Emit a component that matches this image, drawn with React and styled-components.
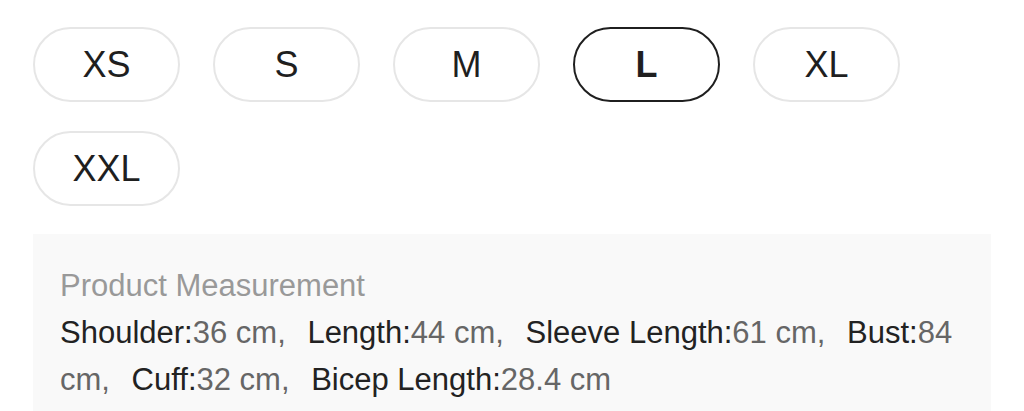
import styled, { createGlobalStyle } from "styled-components";

const GlobalStyle = createGlobalStyle`
  body {
    margin: 0;
    background: #ffffff;
    font-family: "Liberation Sans", Arial, Helvetica, sans-serif;
  }
`;

const Page = styled.div`
  padding: 27px 33px 0;
  width: 1024px;
  box-sizing: border-box;
`;

// size picker
const SizeGrid = styled.div`
  display: flex;
  flex-wrap: wrap;
  column-gap: 33px;
  row-gap: 29px;
`;

const SizePill = styled.button`
  width: 147px;
  height: 75px;
  box-sizing: border-box;
  border-radius: 38px;
  background: #ffffff;
  border: 2px solid ${(p) => (p.$active ? "#1f1f1f" : "#e6e6e6")};
  color: #1f1f1f;
  font-family: inherit;
  font-size: 36px;
  font-weight: ${(p) => (p.$active ? 700 : 400)};
  display: flex;
  align-items: center;
  justify-content: center;
  padding: 0;
  cursor: pointer;
`;

// measurement box
const MeasureBox = styled.div`
  margin-top: 28px;
  background: #f9f9f9;
  padding: 28px 27px 30px;
  font-size: 31px;
  line-height: 47px;
`;

const MeasureTitle = styled.div`
  color: #999999;
`;

const MeasureText = styled.div`
  color: #666666;
`;

const Sep = styled.span`
  margin-right: 13px;
`;

const Label = styled.span`
  color: #222222;
`;

const sizes = ["XS", "S", "M", "L", "XL", "XXL"];

const measures = [
  ["Shoulder", "36 cm"],
  ["Length", "44 cm"],
  ["Sleeve Length", "61 cm"],
  ["Bust", "84 cm"],
  ["Cuff", "32 cm"],
  ["Bicep Length", "28.4 cm"],
];

function App() {
  return (
    <Page>
      <GlobalStyle />
      <SizeGrid>
        {sizes.map((s) => (
          <SizePill key={s} $active={s === "L"}>
            {s}
          </SizePill>
        ))}
      </SizeGrid>
      <MeasureBox>
        <MeasureTitle>Product Measurement</MeasureTitle>
        <MeasureText>
          {measures.map(([k, v], i) => (
            <span key={k}>
              <Label>{k}:</Label>
              {v}
              {i < measures.length - 1 && (
                <>
                  <Sep>,</Sep>{" "}
                </>
              )}
            </span>
          ))}
        </MeasureText>
      </MeasureBox>
    </Page>
  );
}

export default App;
